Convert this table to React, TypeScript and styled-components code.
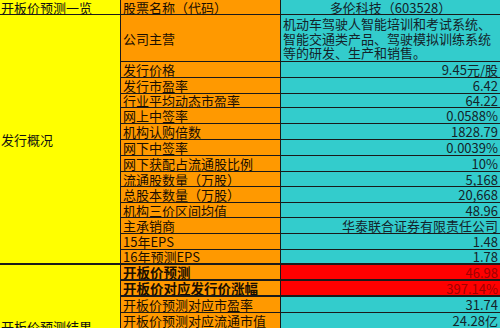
import React from "react";
import styled, { createGlobalStyle, css } from "styled-components";

const Global = createGlobalStyle`
  html, body { margin: 0; padding: 0; background: #ffffff; }
  body { font-family: "Noto Sans CJK SC", "Noto Sans", sans-serif; }
`;

const Sheet = styled.div`
  display: grid;
  grid-template-columns: 121px 160px 219px;
  grid-template-rows: 15px 47px 16px 16px 14px 16px 16px 16px 16px 15px 16px 15px 16px 16px 15px 16px 16px 16px 16px;
  width: 500px;
  height: 328px;
  overflow: hidden;
  font-family: "Noto Sans CJK SC", "Noto Sans", sans-serif;
  font-size: 13px;
  color: #111111;
`;

const SideCell = styled.div<{ $rows: string; $thick?: boolean; $top?: number }>`
  grid-column: 1;
  grid-row: ${(p) => p.$rows};
  background: #ffff00;
  box-sizing: border-box;
  border-right: 1px solid #1a1a1a;
  border-bottom: ${(p) => (p.$thick ? "2px" : "1px")} solid #1a1a1a;
  display: flex;
  align-items: ${(p) => (p.$top !== undefined ? "flex-start" : "center")};
  padding-top: ${(p) => p.$top ?? 0}px;
  padding-left: 1px;
  line-height: 13px;
  white-space: nowrap;
  overflow: hidden;
`;

const LabelCell = styled.div<{ $bold?: boolean; $thick?: boolean }>`
  grid-column: 2;
  background: #ff9900;
  box-sizing: border-box;
  border-right: 1px solid #1a1a1a;
  border-bottom: ${(p) => (p.$thick ? "2px" : "1px")} solid #1a1a1a;
  display: flex;
  align-items: center;
  padding-left: 2px;
  line-height: 13px;
  white-space: nowrap;
  overflow: hidden;
  color: #1a0e00;
  ${(p) =>
    p.$bold &&
    css`
      font-weight: 700;
      font-size: 13.5px;
    `}
`;

const ValueCell = styled.div<{ $red?: boolean; $thick?: boolean; $align?: "left" | "center" | "right" }>`
  grid-column: 3;
  background: ${(p) => (p.$red ? "#ff0000" : "#33cccc")};
  color: ${(p) => (p.$red ? "#a10000" : "#14232a")};
  box-sizing: border-box;
  border-bottom: ${(p) => (p.$thick ? "2px" : "1px")} solid #1a1a1a;
  display: flex;
  align-items: center;
  justify-content: ${(p) =>
    p.$align === "left" ? "flex-start" : p.$align === "center" ? "center" : "flex-end"};
  padding: 0 2px 0 2px;
  line-height: 13px;
  white-space: nowrap;
  overflow: hidden;
`;

const Description = styled.div`
  grid-column: 3;
  background: #33cccc;
  color: #14232a;
  box-sizing: border-box;
  border-bottom: 1px solid #1a1a1a;
  padding: 2px 2px 0 2px;
  display: flex;
  flex-direction: column;
  gap: 1.5px;
  line-height: 13px;
  overflow: hidden;
`;

const Line = styled.div`
  white-space: nowrap;
`;

type Row = {
  label: string;
  value: string;
  bold?: boolean;
  red?: boolean;
  thick?: boolean;
};

const rows: Row[] = [
  { label: "发行价格", value: "9.45元/股" },
  { label: "发行市盈率", value: "6.42" },
  { label: "行业平均动态市盈率", value: "64.22" },
  { label: "网上中签率", value: "0.0588%" },
  { label: "机构认购倍数", value: "1828.79" },
  { label: "网下中签率", value: "0.0039%" },
  { label: "网下获配占流通股比例", value: "10%" },
  { label: "流通股数量（万股）", value: "5,168" },
  { label: "总股本数量（万股）", value: "20,668" },
  { label: "机构三价区间均值", value: "48.96" },
  { label: "主承销商", value: "华泰联合证券有限责任公司" },
  { label: "15年EPS", value: "1.48" },
  { label: "16年预测EPS", value: "1.78", thick: true },
  { label: "开板价预测", value: "46.98", bold: true, red: true, thick: true },
  { label: "开板价对应发行价涨幅", value: "397.14%", bold: true, red: true, thick: true },
  { label: "开板价预测对应市盈率", value: "31.74" },
  { label: "开板价预测对应流通市值", value: "24.28亿" },
];

export default function App() {
  return (
    <>
      <Global />
      <Sheet>
        <SideCell $rows="1">开板价预测一览</SideCell>
        <LabelCell>股票名称（代码）</LabelCell>
        <ValueCell $align="center">多伦科技（603528）</ValueCell>

        <SideCell $rows="2 / 16" $thick>
          发行概况
        </SideCell>
        <SideCell $rows="16 / 20" $top={55}>
          开板价预测结果
        </SideCell>

        <LabelCell>公司主营</LabelCell>
        <Description>
          <Line>机动车驾驶人智能培训和考试系统、</Line>
          <Line>智能交通类产品、驾驶模拟训练系统</Line>
          <Line>等的研发、生产和销售。</Line>
        </Description>

        {rows.map((r) => (
          <React.Fragment key={r.label}>
            <LabelCell $bold={r.bold} $thick={r.thick}>
              {r.label}
            </LabelCell>
            <ValueCell $red={r.red} $thick={r.thick}>
              {r.value}
            </ValueCell>
          </React.Fragment>
        ))}
      </Sheet>
    </>
  );
}
